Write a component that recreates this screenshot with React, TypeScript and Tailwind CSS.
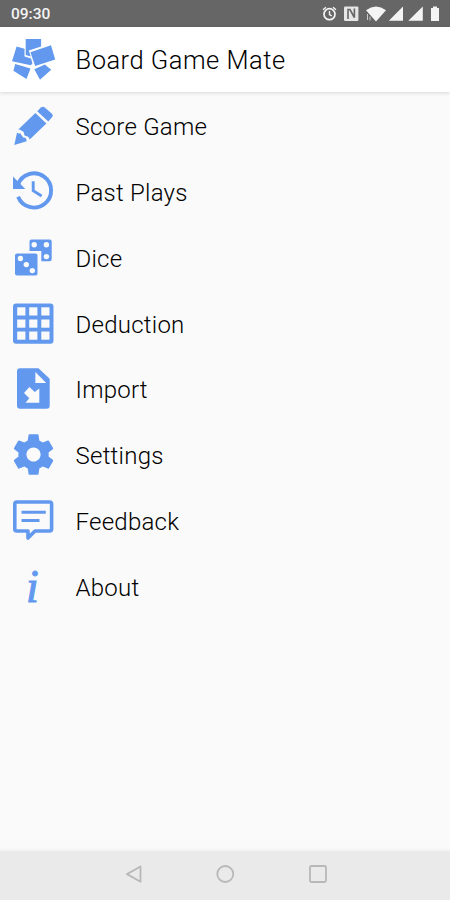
import type { ReactNode } from "react";

const LogoIcon = () => (
  <>
    <path d="M25.700 12h15.400v7.500L28.800 23.500l1.900 6-5-1.500z" />
    <path d="M16.600 19.500l7.900 2.300v7.700l6.600 1.900 1.300 5-1.600 1.800L12 34.200z" />
    <path d="M30.400 25.300L51 18.300l4.200 14.200-20 6.400z" />
    <path d="M15.200 37l15.300 4.500L26.500 52 13.400 43.800z" />
    <path d="M34.300 42.200l10.600-4.800 6.300 5.400L40 52.700z" />
  </>
);

const PencilIcon = () => (
  <>
    <path d="M37.200 17.200l3.700-3.600q1.800-1.600 3.800-.2l7.300 6.400q1.500 1.700.2 3.300l-3.900 4.400z" />
    <path d="M35.400 18.900l11 10.600-16.700 16q-.6-3.300-4.200-3.600-1.600-.4-1.500-2.900-.3-1.900-2.500-2.300-.8-1.200-3.200-1.200z" />
    <path d="M17 38.800q1.700 1.300 3.700.4.200 2.100 1.600 2.700.3 2 3.200 1.900.9 1.400 1.200 3.500L14.300 51z" />
  </>
);

const HistoryIcon = () => (
  <>
    <path d="M13 16.500l12.300 12.400H13z" />
    <g fill="none" stroke="currentColor">
      <path d="M18.100 36.800A17.100 17.100 0 1 0 17.900 24.700" strokeWidth="3.900" />
      <path d="M33.200 21.200v9.500l8.400 5.300" strokeWidth="2.900" />
    </g>
  </>
);

const DiceIcon = () => (
  <>
    <rect x="15" y="27.500" width="22.500" height="22" rx="2" />
    <path d="M31.500 13.500h18.200a2 2 0 0 1 2 2v17.700a2 2 0 0 1-2 2h-8.400V25H29.500v-9.500a2 2 0 0 1 2-2z" />
    <g fill="#fafafa">
      <circle cx="20.400" cy="32.500" r="2.700" />
      <circle cx="26.300" cy="38.600" r="2.700" />
      <circle cx="32.300" cy="44.600" r="2.700" />
      <circle cx="34.200" cy="18.700" r="2.700" />
      <circle cx="46.400" cy="18.700" r="2.700" />
      <circle cx="46.400" cy="30.600" r="2.700" />
    </g>
  </>
);

const GridIcon = () => (
  <>
    <rect x="13" y="11.500" width="40.500" height="40.300" rx="3.200" />
    <g fill="#fafafa">
      {[17.2, 29.2, 41.3].map((x) =>
        [15.3, 27.5, 39.5].map((y) => (
          <rect key={`${x}-${y}`} x={x} y={y} width="8.200" height="8.200" />
        ))
      )}
    </g>
  </>
);

const ImportIcon = () => (
  <>
    <path d="M20 11.200h18.500l11.200 10.500v27a3 3 0 0 1-3 3H20a3 3 0 0 1-3-3V14.200a3 3 0 0 1 3-3z" />
    <path d="M35.400 15v10.900h10.800z" fill="#fafafa" />
    <path d="M29.400 30l5.400 5 4.500-3.600v14.300H25.500l3.800-4.500-5.300-5.200z" fill="#fafafa" />
  </>
);

const SettingsIcon = () => (
  <path
    transform="translate(9.300 7.300) scale(2.020)"
    d="M19.43 12.98c.04-.32.07-.64.07-.98s-.03-.66-.07-.98l2.11-1.65c.19-.15.24-.42.12-.64l-2-3.46c-.12-.22-.39-.3-.61-.22l-2.49 1c-.52-.4-1.08-.73-1.69-.98l-.38-2.65C14.46 2.18 14.25 2 14 2h-4c-.25 0-.46.18-.49.42l-.38 2.65c-.61.25-1.17.59-1.69.98l-2.49-1c-.23-.09-.49 0-.61.22l-2 3.46c-.13.22-.07.49.12.64l2.11 1.65c-.04.32-.07.65-.07.98s.03.66.07.98l-2.11 1.65c-.19.15-.24.42-.12.64l2 3.46c.12.22.39.3.61.22l2.49-1c.52.4 1.08.73 1.69.98l.38 2.65c.03.24.24.42.49.42h4c.25 0 .46-.18.49-.42l.38-2.65c.61-.25 1.17-.59 1.69-.98l2.49 1c.23.09.49 0 .61-.22l2-3.46c.12-.22.07-.49-.12-.64l-2.11-1.65zM12 15.500c-1.930 0-3.500-1.570-3.500-3.500s1.570-3.500 3.500-3.500 3.500 1.570 3.500 3.500-1.570 3.500-3.500 3.500z"
  />
);

const FeedbackIcon = () => (
  <g fill="none" stroke="currentColor" strokeWidth="3.600">
    <path
      strokeLinejoin="round"
      d="M16.800 13h32.800a2 2 0 0 1 2 2v25a2 2 0 0 1-2 2H35l-7 7V42H16.800a2 2 0 0 1-2-2V15a2 2 0 0 1 2-2z"
    />
    <path d="M21.500 23.300h24.300M21.500 31.400h18" strokeWidth="3" />
  </g>
);

const AboutIcon = () => (
  <text
    x="26"
    y="47"
    fontSize="46"
    fontStyle="italic"
    fontFamily="'Liberation Serif', serif"
    stroke="currentColor"
    strokeWidth="1"
  >
    i
  </text>
);

const menu: { label: string; icon: ReactNode }[] = [
  { label: "Score Game", icon: <PencilIcon /> },
  { label: "Past Plays", icon: <HistoryIcon /> },
  { label: "Dice", icon: <DiceIcon /> },
  { label: "Deduction", icon: <GridIcon /> },
  { label: "Import", icon: <ImportIcon /> },
  { label: "Settings", icon: <SettingsIcon /> },
  { label: "Feedback", icon: <FeedbackIcon /> },
  { label: "About", icon: <AboutIcon /> },
];

const navShapes = [
  "M19.500 4.500v15.200L6 12.100z",
  "M20.300 12a8 8 0 1 1-16 0 8 8 0 0 1 16 0z",
  "M6.500 4h13Q21 4 21 5.500v13Q21 20 19.500 20h-13Q5 20 5 18.500v-13Q5 4 6.500 4z",
];

function RowIcon({ children }: { children: ReactNode }) {
  return (
    <svg viewBox="0 0 66 66" fill="currentColor" className="h-[66px] w-[66px] shrink-0 text-[#6299ef]">
      {children}
    </svg>
  );
}

function StatusBar() {
  return (
    <div className="flex h-[27px] shrink-0 items-center justify-between bg-[#666666] pl-[11px] text-[#f4f4f4]">
      <span className="pt-[2px] text-[15.500px] font-medium leading-none">09:30</span>
      <svg viewBox="0 0 130 27" fill="currentColor" className="h-[27px] w-[130px]">
        {/* alarm */}
        <g fill="none" stroke="currentColor" strokeWidth="1.700">
          <circle cx="9.500" cy="14.200" r="5.500" />
          <path d="M3 9.800l3-2.600M16 9.800l-3-2.600M9.500 11v3.500l2.300 1.400" strokeWidth="1.400" />
        </g>
        {/* nfc */}
        <rect x="24" y="6.500" width="14.400" height="14.400" rx="1.200" opacity=".9" />
        <path d="M28 19V9.500h2l4.400 8V8.500" fill="none" stroke="#666666" strokeWidth="1.600" />
        {/* wifi */}
        <path d="M46 10.200Q56 2.800 66 10.200L56 21.500z" />
        <path d="M47.500 14v6M50 16.500v4" stroke="currentColor" strokeWidth="1" opacity=".7" />
        {/* signal */}
        <path d="M83 6.500v14.200H68.800zM102.800 6.500v14.200H88.300z" />
        {/* battery */}
        <path d="M113 6.500h4v1.500h2v13h-8v-13h2z" />
      </svg>
    </div>
  );
}

function NavBar() {
  return (
    <div className="grid h-[49px] shrink-0 grid-cols-[92px_92px_92px] items-center justify-center bg-[#eaeaea] text-[#b8b8b8] shadow-[0_-1px_3px_rgba(0,0,0,0.05)]">
      {navShapes.map((d) => (
        <svg key={d} viewBox="0 0 24 24" className="mx-auto -mt-[3px] h-6 w-6" fill="none" stroke="currentColor" strokeWidth="1.800">
          <path d={d} strokeLinejoin="round" />
        </svg>
      ))}
    </div>
  );
}

export default function App() {
  return (
    <div className="flex h-[900px] w-[450px] flex-col overflow-hidden bg-[#fafafa] font-['Roboto',sans-serif]">
      <StatusBar />
      <header className="z-10 flex h-[65px] shrink-0 items-center bg-white shadow-[0_1px_4px_rgba(0,0,0,0.14)]">
        <RowIcon>
          <LogoIcon />
        </RowIcon>
        <h1 className="ml-[9.500px] pt-[3px] text-[25.500px] font-light leading-none tracking-[0.500px] text-black">
          Board Game Mate
        </h1>
      </header>
      <ul className="flex-1 pt-[2.200px]">
        {menu.map((item) => (
          <li key={item.label} className="flex h-[65.830px] items-center">
            <RowIcon>{item.icon}</RowIcon>
            <span className="ml-[9.500px] text-[24px] font-light leading-none tracking-[0.250px] text-black">
              {item.label}
            </span>
          </li>
        ))}
      </ul>
      <NavBar />
    </div>
  );
}
